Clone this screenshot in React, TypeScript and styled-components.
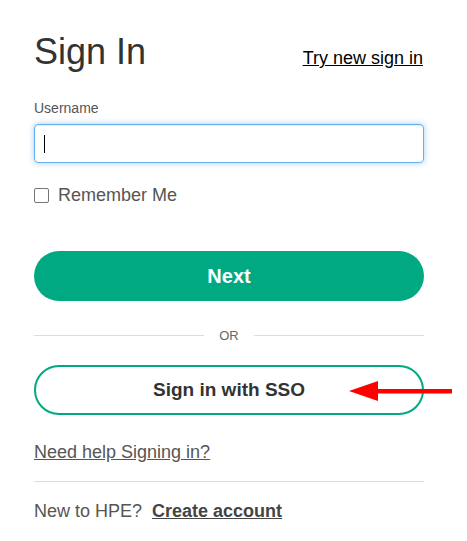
import React from "react";
import styled, { createGlobalStyle } from "styled-components";

const Global = createGlobalStyle`
  html, body { margin: 0; padding: 0; background: #fff; }
  body { font-family: "Liberation Sans", Arial, sans-serif; }
  * { box-sizing: border-box; }
`;

const Page = styled.div`
  width: 467px;
  height: 541px;
  padding: 0 43px 0 34px;
  position: relative;
  overflow: hidden;
`;

const Header = styled.div`
  display: flex;
  align-items: baseline;
  justify-content: space-between;
  padding-top: 30px;
`;

const Title = styled.h1`
  margin: 0;
  font-size: 36px;
  font-weight: 400;
  color: #333;
  line-height: 44px;
`;

const TopLink = styled.a`
  font-size: 18px;
  color: #000;
  text-decoration: underline;
  margin-right: 1px;
`;

const Label = styled.label`
  display: block;
  margin-top: 26px;
  font-size: 14px;
  color: #555;
  line-height: 16px;
`;

const Input = styled.div`
  margin-top: 8px;
  height: 39px;
  border: 1px solid #66afe9;
  border-radius: 4px;
  box-shadow: inset 0 1px 1px rgba(0,0,0,.075), 0 0 6px rgba(102,175,233,.6);
  display: flex;
  align-items: center;
  padding-left: 9px;
`;

const Caret = styled.span`
  width: 1px;
  height: 18px;
  background: #000;
`;

const CheckRow = styled.div`
  display: flex;
  align-items: center;
  gap: 9px;
  margin-top: 22px;
  font-size: 18px;
  color: #555;
`;

const Box = styled.span`
  width: 15px;
  height: 15px;
  border: 1px solid #767676;
  border-radius: 2px;
`;

const PrimaryButton = styled.div`
  margin-top: 45px;
  height: 50px;
  border-radius: 25px;
  background: #01a982;
  color: #fff;
  font-weight: 700;
  font-size: 20px;
  display: flex;
  align-items: center;
  justify-content: center;
`;

const Divider = styled.div`
  margin-top: 27px;
  display: flex;
  align-items: center;
  gap: 15px;
  font-size: 13px;
  color: #666;
  &::before, &::after {
    content: "";
    flex: 1;
    height: 1px;
    background: #ddd;
  }
`;

const OutlineButton = styled.div`
  margin-top: 22px;
  height: 50px;
  border-radius: 25px;
  border: 2px solid #01a982;
  color: #333;
  font-weight: 700;
  font-size: 19px;
  display: flex;
  align-items: center;
  justify-content: center;
  position: relative;
`;

const Arrow = styled.svg`
  position: absolute;
  left: 313px;
  top: 14px;
`;

const HelpLink = styled.a`
  display: inline-block;
  margin-top: 27px;
  font-size: 18px;
  color: #555;
  text-decoration: underline;
`;

const Rule = styled.hr`
  margin: 18px 0 0;
  border: 0;
  height: 1px;
  background: #ddd;
`;

const Footer = styled.div`
  margin-top: 19px;
  font-size: 18px;
  color: #555;
  display: flex;
  gap: 10px;
`;

const Strong = styled.a`
  font-weight: 700;
  color: #444;
  text-decoration: underline;
`;

export default function App() {
  return (
    <>
      <Global />
      <Page>
        <Header>
          <Title>Sign In</Title>
          <TopLink>Try new sign in</TopLink>
        </Header>
        <Label>Username</Label>
        <Input>
          <Caret />
        </Input>
        <CheckRow>
          <Box />
          Remember Me
        </CheckRow>
        <PrimaryButton>Next</PrimaryButton>
        <Divider>OR</Divider>
        <OutlineButton>
          Sign in with SSO
          <Arrow width="103" height="20" viewBox="0 0 103 20">
            <polygon points="0,10 29,0 29,20" fill="#f00" />
            <rect x="27" y="8" width="76" height="4.5" fill="#f00" />
          </Arrow>
        </OutlineButton>
        <HelpLink>Need help Signing in?</HelpLink>
        <Rule />
        <Footer>
          New to HPE? <Strong>Create account</Strong>
        </Footer>
      </Page>
    </>
  );
}
